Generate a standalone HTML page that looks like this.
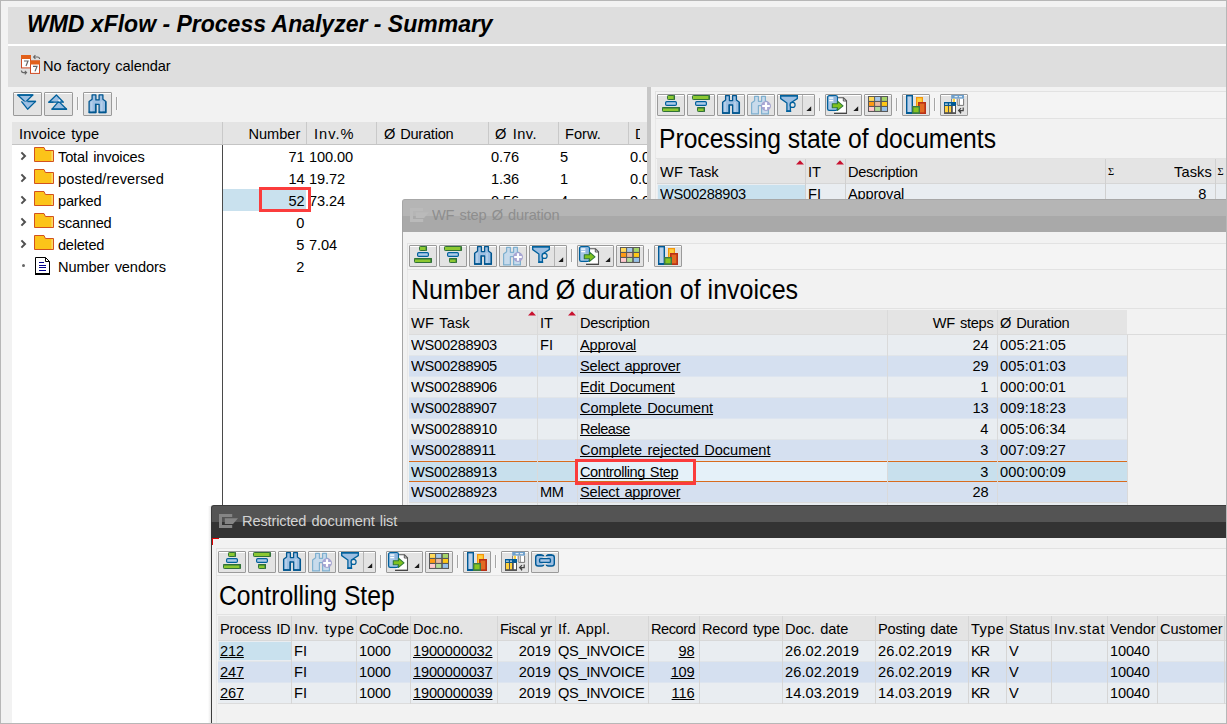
<!DOCTYPE html>
<html lang="en"><head><meta charset="utf-8"><title>WMD xFlow - Process Analyzer - Summary</title>
<style>
html,body{margin:0;padding:0}
body{width:1227px;height:724px;overflow:hidden;background:#f2f2f2;position:relative;
 font-family:"Liberation Sans","DejaVu Sans",sans-serif;font-size:14.6px;color:#000}
div,span,i,a{box-sizing:border-box}
.abs,.t,.btn,.tsep,.bdiv,.box{position:absolute}
.t{white-space:nowrap;line-height:1;display:block}
.u{text-decoration:underline;text-decoration-thickness:1px;text-underline-offset:1px;text-decoration-skip-ink:none}
.btn{background:#e3e3e3;border:1px solid #9a9a9a;border-radius:1px;box-shadow:inset 0 1px 0 #fff}
.btn svg{position:absolute;left:-1px;top:-1px;display:block}
.bdiv{top:0;width:1px;height:100%;background:#b4b4b4}
.tsep{width:1px;height:13px;background:#a6a6a6;box-shadow:1px 0 0 #fafafa}
.hl{background:#e0e0e0}
.cell{position:absolute;overflow:hidden;white-space:nowrap}
</style></head><body>

<div class="box" style="left:8px;top:7px;width:1218px;height:37px;background:#dedede"></div>
<div class="box" style="left:8px;top:44px;width:1218px;height:2px;background:#fff"></div>
<div class="box" style="left:8px;top:46px;width:1218px;height:41px;background:#dedede"></div>
<span class="t" style="left:27px;top:12.53px;font-size:23px;font-weight:bold;font-style:italic;">WMD xFlow - Process Analyzer - Summary</span>
<svg class="abs" style="left:20px;top:54px" width="22" height="22" viewBox="0 0 22 22">
<rect x="1.5" y="1.5" width="9" height="12.4" fill="#fff" stroke="#d04a22"/><rect x="1" y="1" width="10" height="4" fill="#e2601a"/>
<path d="M4,7 H8 L6,12" fill="none" stroke="#666" stroke-width="1.2"/>
<rect x="10.5" y="7" width="9" height="12.4" fill="#fff" stroke="#d04a22"/><rect x="10" y="6.5" width="10" height="4" fill="#e2601a"/>
<path d="M13,12.4 H17 L15,17.4" fill="none" stroke="#666" stroke-width="1.2"/>
<path d="M13.6,3 H17.4 Q19.6,3 19.6,5 M15.4,1.2 L13.6,3 L15.4,4.8" fill="none" stroke="#666" stroke-width="1.1"/>
<path d="M1.4,16.6 Q1.4,18.6 3.4,18.6 H6.6 M4.8,16.8 L6.6,18.6 L4.8,20.4" fill="none" stroke="#666" stroke-width="1.1"/>
</svg>
<span class="t" style="left:43px;top:57.90px;font-size:15.0px;word-spacing:1.336px;letter-spacing:-0.089px;transform:scaleX(0.9733);transform-origin:0 0;">No factory calendar</span>
<div class="btn" style="left:13px;top:92px;width:29px;height:24px"><svg width="29" height="24" viewBox="0 0 29 24"><g transform="translate(-0.2,-0.2)"><path d="M5,3.2 H20 L12.6,10.4 Z" fill="#9dbfe2" stroke="#00609c" stroke-width="1.3" stroke-linejoin="round"/><path d="M8.6,9.6 L14.8,17.4 L22.8,9.6 H15" fill="#9dbfe2" stroke="#00609c" stroke-width="1.3" stroke-linejoin="round"/><rect x="4.6" y="2.6" width="15.8" height="1.4" fill="#00609c"/><rect x="14.6" y="9" width="8.6" height="1.4" fill="#00609c"/></g></svg></div>
<div class="btn" style="left:44px;top:92px;width:29px;height:24px"><svg width="29" height="24" viewBox="0 0 29 24"><g transform="translate(-0.2,-0.2)"><path d="M12.6,3.2 L19.6,10.4 H5 Z" fill="#9dbfe2" stroke="#00609c" stroke-width="1.3" stroke-linejoin="round"/><path d="M14.9,9.6 L22.8,17.4 H8.2 Z" fill="#9dbfe2" stroke="#00609c" stroke-width="1.3" stroke-linejoin="round"/><rect x="7.8" y="16.6" width="15.4" height="1.5" fill="#00609c"/><rect x="4.6" y="9.8" width="5" height="1.3" fill="#00609c"/><circle cx="15.4" cy="8.8" r="1.1" fill="#e8f0f8"/></g></svg></div>
<div class="tsep" style="left:77px;top:97px"></div>
<div class="btn" style="left:83px;top:92px;width:29px;height:24px"><svg width="29" height="24" viewBox="0 0 29 24"><g transform="translate(0.5,1.3)"><path d="M8.6,1.6 H12.4 V6.6 H15.6 V1.6 H19.4 V6 L22.4,8.2 V19.2 H15.6 V11 H12.4 V19.2 H5.6 V8.2 L8.6,6 Z" fill="#9dbfe2" stroke="#00568f" stroke-width="1.3" stroke-linejoin="round"/><rect x="5.2" y="18.2" width="7.6" height="1.6" fill="#00568f"/><rect x="15.2" y="18.2" width="7.6" height="1.6" fill="#00568f"/><rect x="11.4" y="10.4" width="1.4" height="8" fill="#00568f"/><rect x="21.6" y="8.4" width="1.2" height="10" fill="#00568f"/><rect x="7" y="8" width="2" height="10" fill="#bdd5ee" opacity="0.7"/><rect x="17" y="8" width="2" height="10" fill="#bdd5ee" opacity="0.7"/></g></svg></div>
<div class="tsep" style="left:116px;top:97px"></div>
<div class="box" style="left:12px;top:145px;width:635px;height:579px;background:#fff"></div>
<div class="box" style="left:12px;top:122px;width:635px;height:23px;background:#e4e4e4;border-bottom:1px solid #c4c4c4"></div>
<div class="box" style="left:222px;top:122px;width:1px;height:22px;background:#c9c9c9"></div>
<div class="box" style="left:306px;top:122px;width:1px;height:22px;background:#c9c9c9"></div>
<div class="box" style="left:376px;top:122px;width:1px;height:22px;background:#c9c9c9"></div>
<div class="box" style="left:488px;top:122px;width:1px;height:22px;background:#c9c9c9"></div>
<div class="box" style="left:558px;top:122px;width:1px;height:22px;background:#c9c9c9"></div>
<div class="box" style="left:628px;top:122px;width:1px;height:22px;background:#c9c9c9"></div>
<div class="box" style="left:222px;top:145px;width:1px;height:579px;background:#4a4a4a"></div>
<span class="t" style="left:18.5px;top:125.90px;font-size:15.0px;word-spacing:1.336px;letter-spacing:0.074px;transform:scaleX(0.9733);transform-origin:0 0;">Invoice type</span>
<span class="t" style="right:927px;top:125.90px;font-size:15.0px;transform:scaleX(0.9733);transform-origin:100% 0;">Number</span>
<span class="t" style="left:313.5px;top:125.90px;font-size:15.0px;letter-spacing:1.027px;transform:scaleX(0.9733);transform-origin:0 0;">Inv.%</span>
<span class="t" style="left:383.5px;top:125.90px;font-size:15.0px;word-spacing:1.336px;letter-spacing:-0.257px;transform:scaleX(0.9733);transform-origin:0 0;">Ø Duration</span>
<span class="t" style="left:495.3px;top:125.90px;font-size:15.0px;word-spacing:1.336px;letter-spacing:0.497px;transform:scaleX(0.9733);transform-origin:0 0;">Ø Inv.</span>
<span class="t" style="left:565px;top:125.90px;font-size:15.0px;transform:scaleX(0.9733);transform-origin:0 0;">Forw.</span>
<div class="cell" style="left:635px;top:124px;width:5.4px;height:18px"><span class="t" style="left:0.4px;top:1.90px;font-size:15.0px;transform:scaleX(0.9733);transform-origin:0 0;">D</span></div>
<div class="box" style="left:223px;top:189px;width:83px;height:22px;background:#c9e1ee"></div>
<svg class="abs" style="left:20px;top:151px" width="7" height="10" viewBox="0 0 7 10"><path d="M1.4,1.4 L5,5 L1.4,8.6" fill="none" stroke="#505050" stroke-width="2"/></svg>
<svg class="abs" style="left:34px;top:147px" width="20" height="15" viewBox="0 0 20 15"><path d="M0.5,0.5 H10 L11.4,3.5 H19.5 V14.5 H0.5 Z" fill="#fcc419" stroke="#d2521e" stroke-linejoin="round"/><rect x="17.4" y="4.2" width="1.6" height="9.8" fill="#fdd968"/></svg>
<span class="t" style="left:58.3px;top:148.90px;font-size:15.0px;word-spacing:1.336px;letter-spacing:-0.167px;transform:scaleX(0.9733);transform-origin:0 0;">Total invoices</span>
<span class="t" style="right:923px;top:148.90px;font-size:15.0px;letter-spacing:-0.175px;transform:scaleX(0.9733);transform-origin:100% 0;">71</span>
<span class="t" style="left:308.6px;top:148.90px;font-size:15.0px;letter-spacing:-0.103px;transform:scaleX(0.9733);transform-origin:0 0;">100.00</span>
<span class="t" style="left:490.5px;top:148.90px;font-size:15.0px;letter-spacing:-0.103px;transform:scaleX(0.9733);transform-origin:0 0;">0.76</span>
<span class="t" style="left:560.3px;top:148.90px;font-size:15.0px;letter-spacing:-0.175px;transform:scaleX(0.9733);transform-origin:0 0;">5</span>
<div class="cell" style="left:629px;top:145px;width:18px;height:22px"><span class="t" style="left:1px;top:3.90px;font-size:15.0px;letter-spacing:-0.103px;transform:scaleX(0.9733);transform-origin:0 0;">0.00</span></div>
<svg class="abs" style="left:20px;top:173px" width="7" height="10" viewBox="0 0 7 10"><path d="M1.4,1.4 L5,5 L1.4,8.6" fill="none" stroke="#505050" stroke-width="2"/></svg>
<svg class="abs" style="left:34px;top:169px" width="20" height="15" viewBox="0 0 20 15"><path d="M0.5,0.5 H10 L11.4,3.5 H19.5 V14.5 H0.5 Z" fill="#fcc419" stroke="#d2521e" stroke-linejoin="round"/><rect x="17.4" y="4.2" width="1.6" height="9.8" fill="#fdd968"/></svg>
<span class="t" style="left:58.3px;top:170.90px;font-size:15.0px;letter-spacing:0.092px;transform:scaleX(0.9733);transform-origin:0 0;">posted/reversed</span>
<span class="t" style="right:923px;top:170.90px;font-size:15.0px;letter-spacing:-0.175px;transform:scaleX(0.9733);transform-origin:100% 0;">14</span>
<span class="t" style="left:308.6px;top:170.90px;font-size:15.0px;letter-spacing:-0.103px;transform:scaleX(0.9733);transform-origin:0 0;">19.72</span>
<span class="t" style="left:490.5px;top:170.90px;font-size:15.0px;letter-spacing:-0.103px;transform:scaleX(0.9733);transform-origin:0 0;">1.36</span>
<span class="t" style="left:560.3px;top:170.90px;font-size:15.0px;letter-spacing:-0.175px;transform:scaleX(0.9733);transform-origin:0 0;">1</span>
<div class="cell" style="left:629px;top:167px;width:18px;height:22px"><span class="t" style="left:1px;top:3.90px;font-size:15.0px;letter-spacing:-0.103px;transform:scaleX(0.9733);transform-origin:0 0;">0.00</span></div>
<svg class="abs" style="left:20px;top:195px" width="7" height="10" viewBox="0 0 7 10"><path d="M1.4,1.4 L5,5 L1.4,8.6" fill="none" stroke="#505050" stroke-width="2"/></svg>
<svg class="abs" style="left:34px;top:191px" width="20" height="15" viewBox="0 0 20 15"><path d="M0.5,0.5 H10 L11.4,3.5 H19.5 V14.5 H0.5 Z" fill="#fcc419" stroke="#d2521e" stroke-linejoin="round"/><rect x="17.4" y="4.2" width="1.6" height="9.8" fill="#fdd968"/></svg>
<span class="t" style="left:58.3px;top:192.90px;font-size:15.0px;letter-spacing:-0.205px;transform:scaleX(0.9733);transform-origin:0 0;">parked</span>
<span class="t" style="right:923px;top:192.90px;font-size:15.0px;letter-spacing:-0.175px;transform:scaleX(0.9733);transform-origin:100% 0;">52</span>
<span class="t" style="left:308.6px;top:192.90px;font-size:15.0px;letter-spacing:-0.103px;transform:scaleX(0.9733);transform-origin:0 0;">73.24</span>
<span class="t" style="left:490.5px;top:192.90px;font-size:15.0px;letter-spacing:-0.103px;transform:scaleX(0.9733);transform-origin:0 0;">0.56</span>
<span class="t" style="left:560.3px;top:192.90px;font-size:15.0px;letter-spacing:-0.175px;transform:scaleX(0.9733);transform-origin:0 0;">4</span>
<div class="cell" style="left:629px;top:189px;width:18px;height:22px"><span class="t" style="left:1px;top:3.90px;font-size:15.0px;letter-spacing:-0.103px;transform:scaleX(0.9733);transform-origin:0 0;">0.00</span></div>
<svg class="abs" style="left:20px;top:217px" width="7" height="10" viewBox="0 0 7 10"><path d="M1.4,1.4 L5,5 L1.4,8.6" fill="none" stroke="#505050" stroke-width="2"/></svg>
<svg class="abs" style="left:34px;top:213px" width="20" height="15" viewBox="0 0 20 15"><path d="M0.5,0.5 H10 L11.4,3.5 H19.5 V14.5 H0.5 Z" fill="#fcc419" stroke="#d2521e" stroke-linejoin="round"/><rect x="17.4" y="4.2" width="1.6" height="9.8" fill="#fdd968"/></svg>
<span class="t" style="left:58.3px;top:214.90px;font-size:15.0px;letter-spacing:-0.257px;transform:scaleX(0.9733);transform-origin:0 0;">scanned</span>
<span class="t" style="right:923px;top:214.90px;font-size:15.0px;letter-spacing:-0.175px;transform:scaleX(0.9733);transform-origin:100% 0;">0</span>
<svg class="abs" style="left:20px;top:239px" width="7" height="10" viewBox="0 0 7 10"><path d="M1.4,1.4 L5,5 L1.4,8.6" fill="none" stroke="#505050" stroke-width="2"/></svg>
<svg class="abs" style="left:34px;top:235px" width="20" height="15" viewBox="0 0 20 15"><path d="M0.5,0.5 H10 L11.4,3.5 H19.5 V14.5 H0.5 Z" fill="#fcc419" stroke="#d2521e" stroke-linejoin="round"/><rect x="17.4" y="4.2" width="1.6" height="9.8" fill="#fdd968"/></svg>
<span class="t" style="left:58.3px;top:236.90px;font-size:15.0px;letter-spacing:-0.257px;transform:scaleX(0.9733);transform-origin:0 0;">deleted</span>
<span class="t" style="right:923px;top:236.90px;font-size:15.0px;letter-spacing:-0.175px;transform:scaleX(0.9733);transform-origin:100% 0;">5</span>
<span class="t" style="left:308.6px;top:236.90px;font-size:15.0px;letter-spacing:-0.103px;transform:scaleX(0.9733);transform-origin:0 0;">7.04</span>
<div class="box" style="left:22px;top:264px;width:3px;height:3px;border-radius:2px;background:#666"></div>
<svg class="abs" style="left:35px;top:257px" width="15" height="18" viewBox="0 0 15 18"><path d="M0.5,0.5 H10.5 L14.5,4.5 V16.5 H0.5 Z" fill="#fff" stroke="#000"/><path d="M10.5,0.5 V4.5 H14.5" fill="none" stroke="#000"/><rect x="0" y="16" width="15" height="2" fill="#000"/><path d="M4,5.5 H9 M4,8.5 H11 M4,10.5 H11 M4,13.5 H11" stroke="#00008b" stroke-width="1"/></svg>
<span class="t" style="left:58.3px;top:258.90px;font-size:15.0px;word-spacing:1.336px;letter-spacing:-0.095px;transform:scaleX(0.9733);transform-origin:0 0;">Number vendors</span>
<span class="t" style="right:923px;top:258.90px;font-size:15.0px;letter-spacing:-0.175px;transform:scaleX(0.9733);transform-origin:100% 0;">2</span>
<div class="box" style="left:259px;top:187px;width:52px;height:25px;border:3px solid #fb3c3c"></div>
<div class="box" style="left:647px;top:87px;width:4px;height:637px;background:#c7c7c7"></div>
<div class="box" style="left:655px;top:91px;width:572px;height:28px;border:1px solid #e2e2e2;border-right:0;background:#f4f4f4"></div>
<div class="btn" style="left:657px;top:94px;width:28px;height:22px"><svg width="28" height="22" viewBox="0 0 28 22"><rect x="10.5" y="1.5" width="7" height="4" rx="0.8" fill="#8cc832" stroke="#2f7038"/><rect x="16.6" y="1.2" width="1.4" height="4.6" fill="#2f7038"/><rect x="8.6" y="7.6" width="10.8" height="3.8" rx="1.2" fill="#aecbe9" stroke="#00609c" stroke-width="1.2"/><rect x="5.5" y="13.5" width="17" height="4" rx="0.8" fill="#8cc832" stroke="#2f7038"/><rect x="5.2" y="13.2" width="17.6" height="1.3" fill="#2f7038"/><rect x="21.4" y="13.2" width="1.5" height="4.6" fill="#2f7038"/></svg></div><div class="btn" style="left:687px;top:94px;width:28px;height:22px"><svg width="28" height="22" viewBox="0 0 28 22"><rect x="5.5" y="1.5" width="17" height="4" rx="0.8" fill="#8cc832" stroke="#2f7038"/><rect x="21.4" y="1.2" width="1.5" height="4.6" fill="#2f7038"/><rect x="8.6" y="7.6" width="10.8" height="3.8" rx="1.2" fill="#aecbe9" stroke="#00609c" stroke-width="1.2"/><rect x="10.5" y="13.5" width="7" height="4" rx="0.8" fill="#8cc832" stroke="#2f7038"/><rect x="10.2" y="13.2" width="7.6" height="1.3" fill="#2f7038"/><rect x="16.6" y="13.2" width="1.4" height="4.6" fill="#2f7038"/></svg></div><div class="btn" style="left:717px;top:94px;width:28px;height:22px"><svg width="28" height="22" viewBox="0 0 28 22"><g transform="translate(0,0)"><path d="M8.6,1.6 H12.4 V6.6 H15.6 V1.6 H19.4 V6 L22.4,8.2 V19.2 H15.6 V11 H12.4 V19.2 H5.6 V8.2 L8.6,6 Z" fill="#9dbfe2" stroke="#00568f" stroke-width="1.3" stroke-linejoin="round"/><rect x="5.2" y="18.2" width="7.6" height="1.6" fill="#00568f"/><rect x="15.2" y="18.2" width="7.6" height="1.6" fill="#00568f"/><rect x="11.4" y="10.4" width="1.4" height="8" fill="#00568f"/><rect x="21.6" y="8.4" width="1.2" height="10" fill="#00568f"/><rect x="7" y="8" width="2" height="10" fill="#bdd5ee" opacity="0.7"/><rect x="17" y="8" width="2" height="10" fill="#bdd5ee" opacity="0.7"/></g></svg></div><div class="btn" style="left:747px;top:94px;width:28px;height:22px"><svg width="28" height="22" viewBox="0 0 28 22"><path transform="translate(-1,0.7)" d="M8.6,1.6 H12.4 V6.6 H15.6 V1.6 H19.4 V6 L22.4,8.2 V19.2 H15.6 V11 H12.4 V19.2 H5.6 V8.2 L8.6,6 Z" fill="#c8dbec" stroke="#7fb0cf" stroke-width="1.2" stroke-linejoin="round"/><circle cx="19" cy="12" r="4.6" fill="#a9a6d4" stroke="#9c9acb" stroke-width="0.6"/><path d="M19,8.2 V15.8 M15.2,12 H22.8" stroke="#fff" stroke-width="2.2"/></svg></div><div class="btn" style="left:777px;top:94px;width:38px;height:22px"><svg width="38" height="22" viewBox="0 0 38 22"><path d="M3.7,1.7 H20.3 V4.6 L13.4,9 V17 H9.9 V9 L3.7,4.6 Z" fill="#9dbfe2" stroke="#00609c" stroke-width="1.3" stroke-linejoin="miter"/><rect x="3" y="1" width="18" height="1.6" fill="#00609c"/><circle cx="15.6" cy="10.9" r="2.5" fill="#e6e6e6" stroke="#00609c" stroke-width="1.2"/><rect x="9.2" y="16.6" width="5" height="1.4" fill="#00609c"/><path d="M34.2,12.2 V17 H29.400000000000002 Z" fill="#1a1a1a"/></svg><i class="bdiv" style="left:24px"></i></div><div class="tsep" style="left:819px;top:98px"></div><div class="btn" style="left:825px;top:94px;width:37px;height:22px"><svg width="37" height="22" viewBox="0 0 37 22"><path d="M11.5,3.8 H18.5 L21.5,6.8 V19.2 H9.5" fill="#fff" stroke="#555" stroke-width="1.1"/><path d="M18.3,3.8 V7 H21.5" fill="none" stroke="#555" stroke-width="1"/><rect x="9" y="18.8" width="12.9" height="1.2" fill="#444"/><rect x="2.6" y="1.7" width="9.8" height="14.6" rx="1.6" fill="#a9c8e8" stroke="#00609c" stroke-width="1.3"/><rect x="4.2" y="3.4" width="4" height="1.3" fill="#fff"/><rect x="4.2" y="6" width="4" height="1.2" fill="#fff"/><rect x="8.8" y="2.6" width="2.6" height="6" fill="#8fb4dc"/><path d="M7.3,9.8 H12.5 V7.2 L18,11.8 L12.5,16.4 V13.8 H7.3 Z" fill="#7fc21e" stroke="#2f7a38" stroke-width="1.1" stroke-linejoin="round"/><path d="M33.2,12.2 V17 H28.400000000000002 Z" fill="#1a1a1a"/></svg></div><div class="btn" style="left:864px;top:94px;width:28px;height:22px"><svg width="28" height="22" viewBox="0 0 28 22"><rect x="4" y="2" width="20" height="16" fill="#595959"/><rect x="5" y="3" width="5.1" height="3.9" fill="#ffd95a"/><rect x="11.1" y="3" width="5.1" height="3.9" fill="#a6c8ea"/><rect x="17.8" y="3" width="5.2" height="3.9" fill="#a5d46a"/><rect x="5" y="8" width="5.1" height="3.9" fill="#ff9a14"/><rect x="11.1" y="8" width="5.1" height="3.9" fill="#e8b8a0"/><rect x="17.8" y="8" width="5.2" height="3.9" fill="#ffc814"/><rect x="5" y="13" width="5.1" height="3.9" fill="#ffc8cc"/><rect x="11.1" y="13" width="5.1" height="3.9" fill="#b0dc96"/><rect x="17.8" y="13" width="5.2" height="3.9" fill="#96c0e8"/></svg></div><div class="tsep" style="left:896px;top:98px"></div><div class="btn" style="left:902px;top:94px;width:28px;height:22px"><svg width="28" height="22" viewBox="0 0 28 22"><rect x="4.7" y="1.7" width="5.6" height="17.6" fill="#b9d1eb" stroke="#005a96" stroke-width="1.4"/><rect x="4" y="18" width="7" height="2" fill="#005a96"/><rect x="14.6" y="3.6" width="5.8" height="15" fill="#ffd040" stroke="#f5960a" stroke-width="1.2"/><rect x="16.8" y="8.8" width="6.4" height="10.4" fill="#e26a22" stroke="#b83018" stroke-width="1.6"/><rect x="10.7" y="12.7" width="6.6" height="6.6" fill="#86c41e" stroke="#3a7a44" stroke-width="1.4"/><rect x="10" y="18.4" width="8" height="1.6" fill="#3a7a44"/></svg></div><div class="tsep" style="left:934px;top:98px"></div><div class="btn" style="left:940px;top:94px;width:28px;height:22px"><svg width="28" height="22" viewBox="0 0 28 22"><rect x="11.2" y="0.9" width="12.8" height="3.9" fill="#6ea0cc"/><rect x="14.6" y="2.2" width="3" height="1" fill="#fff"/><rect x="19" y="2.2" width="3" height="1" fill="#fff"/><rect x="11.2" y="4.8" width="12.8" height="6.8" fill="#fff"/><path d="M11.6,4.8 V11 M17.2,4.8 V11 M19.2,4.8 V11 M23.6,4.8 V11.4 H17.4" fill="none" stroke="#666" stroke-width="0.9"/><rect x="12.8" y="4.8" width="2.2" height="3.4" fill="#ffd23c"/><rect x="4" y="8" width="12" height="12" fill="#555"/><rect x="4" y="8" width="12" height="3.8" fill="#005a96"/><rect x="5" y="9.6" width="2.8" height="1" fill="#fff"/><rect x="9" y="9.6" width="2" height="1" fill="#fff"/><rect x="5" y="12" width="3" height="6.2" fill="#ffd23c"/><rect x="9" y="12" width="2" height="6.2" fill="#ffd23c"/><rect x="12.8" y="12" width="2.2" height="6.2" fill="#fff"/><path d="M23.2,13.4 V16.6 H18.8 M21,14.2 L18.6,16.6 L21,19" fill="none" stroke="#444" stroke-width="1.2"/><path d="M20.6,16.6 V19.6" stroke="#444" stroke-width="0.9"/></svg></div>
<span class="t" style="left:658.6px;top:125.51px;font-size:26.8px;transform:scaleX(0.9196);transform-origin:0 0;">Processing state of documents</span>
<div class="box" style="left:655px;top:158px;width:572px;height:1px;background:#e2e2e2"></div>
<div class="box" style="left:655px;top:119px;width:1px;height:90px;background:#e8e8e8"></div>
<div class="box" style="left:657px;top:159px;width:570px;height:25px;background:#e4e4e4;border-bottom:1px solid #d6d6d6"></div>
<div class="box" style="left:657px;top:184px;width:570px;height:21px;background:#e9edf1"></div>
<div class="box" style="left:658px;top:185px;width:147px;height:20px;background:#c9e1ee"></div>
<div class="box" style="left:805px;top:159px;width:1px;height:46px;background:#d0d0d0"></div>
<div class="box" style="left:845px;top:159px;width:1px;height:46px;background:#d0d0d0"></div>
<div class="box" style="left:1105px;top:159px;width:1px;height:46px;background:#d0d0d0"></div>
<div class="box" style="left:1215px;top:159px;width:1px;height:46px;background:#d0d0d0"></div>
<span class="t" style="left:659.5px;top:163.90px;font-size:15.0px;word-spacing:1.336px;letter-spacing:0.148px;transform:scaleX(0.9733);transform-origin:0 0;">WF Task</span>
<span class="t" style="left:808px;top:163.90px;font-size:15.0px;transform:scaleX(0.9733);transform-origin:0 0;">IT</span>
<span class="t" style="left:847.6px;top:163.90px;font-size:15.0px;letter-spacing:-0.329px;transform:scaleX(0.9733);transform-origin:0 0;">Description</span>
<span class="t" style="left:1108px;top:166.71px;font-size:10.5px;font-family:'Liberation Serif',serif;">Σ</span>
<span class="t" style="right:15px;top:163.90px;font-size:15.0px;letter-spacing:0.103px;transform:scaleX(0.9733);transform-origin:100% 0;">Tasks</span>
<span class="t" style="left:1217.5px;top:166.71px;font-size:10.5px;font-family:'Liberation Serif',serif;">Σ</span>
<svg class="abs" style="left:795.6px;top:159.8px" width="8" height="5" viewBox="0 0 8 5"><path d="M0,4.6 L4,0.2 L8,4.6 Z" fill="#c8102e"/></svg>
<svg class="abs" style="left:835.6px;top:159.8px" width="8" height="5" viewBox="0 0 8 5"><path d="M0,4.6 L4,0.2 L8,4.6 Z" fill="#c8102e"/></svg>
<span class="t" style="left:659.5px;top:185.90px;font-size:15.0px;letter-spacing:-0.257px;transform:scaleX(0.9733);transform-origin:0 0;">WS00288903</span>
<span class="t" style="left:808px;top:185.90px;font-size:15.0px;transform:scaleX(0.9733);transform-origin:0 0;">FI</span>
<span class="t" style="left:847.6px;top:185.90px;font-size:15.0px;letter-spacing:-0.185px;transform:scaleX(0.9733);transform-origin:0 0;">Approval</span>
<span class="t" style="right:21px;top:185.90px;font-size:15.0px;letter-spacing:-0.175px;transform:scaleX(0.9733);transform-origin:100% 0;">8</span>
<div class="box" style="left:402px;top:203px;width:825px;height:326px;background:#f2f2f2;border-left:1px solid #a6a6a6"></div>
<div class="box" style="left:402px;top:199px;width:825px;height:17px;background:#b5b5b5;border-top:1px solid #a7a7a7;border-left:1px solid #a6a6a6;border-top-left-radius:3px"></div>
<div class="box" style="left:402px;top:216px;width:825px;height:16px;background:#a9a9a9;border-left:1px solid #a2a2a2"></div>
<svg class="abs" style="left:410px;top:208px" width="20" height="14" viewBox="0 0 20 14"><path d="M0,0 H13.2 V3 H3 V11 H13.2 V14 H0 Z" fill="#bababa"/><path d="M5.8,4.2 H19 L14,10 H5.8 Z" fill="#bababa"/></svg>
<span class="t" style="left:432.3px;top:207.20px;font-size:15.0px;color:#8e8e8e;word-spacing:1.336px;letter-spacing:-0.171px;transform:scaleX(0.9733);transform-origin:0 0;">WF step Ø duration</span>
<div class="box" style="left:407px;top:243px;width:820px;height:27px;border:1px solid #e2e2e2;border-right:0;background:#f4f4f4"></div>
<div class="btn" style="left:409px;top:245px;width:28px;height:22px"><svg width="28" height="22" viewBox="0 0 28 22"><rect x="10.5" y="1.5" width="7" height="4" rx="0.8" fill="#8cc832" stroke="#2f7038"/><rect x="16.6" y="1.2" width="1.4" height="4.6" fill="#2f7038"/><rect x="8.6" y="7.6" width="10.8" height="3.8" rx="1.2" fill="#aecbe9" stroke="#00609c" stroke-width="1.2"/><rect x="5.5" y="13.5" width="17" height="4" rx="0.8" fill="#8cc832" stroke="#2f7038"/><rect x="5.2" y="13.2" width="17.6" height="1.3" fill="#2f7038"/><rect x="21.4" y="13.2" width="1.5" height="4.6" fill="#2f7038"/></svg></div><div class="btn" style="left:439px;top:245px;width:28px;height:22px"><svg width="28" height="22" viewBox="0 0 28 22"><rect x="5.5" y="1.5" width="17" height="4" rx="0.8" fill="#8cc832" stroke="#2f7038"/><rect x="21.4" y="1.2" width="1.5" height="4.6" fill="#2f7038"/><rect x="8.6" y="7.6" width="10.8" height="3.8" rx="1.2" fill="#aecbe9" stroke="#00609c" stroke-width="1.2"/><rect x="10.5" y="13.5" width="7" height="4" rx="0.8" fill="#8cc832" stroke="#2f7038"/><rect x="10.2" y="13.2" width="7.6" height="1.3" fill="#2f7038"/><rect x="16.6" y="13.2" width="1.4" height="4.6" fill="#2f7038"/></svg></div><div class="btn" style="left:469px;top:245px;width:28px;height:22px"><svg width="28" height="22" viewBox="0 0 28 22"><g transform="translate(0,0)"><path d="M8.6,1.6 H12.4 V6.6 H15.6 V1.6 H19.4 V6 L22.4,8.2 V19.2 H15.6 V11 H12.4 V19.2 H5.6 V8.2 L8.6,6 Z" fill="#9dbfe2" stroke="#00568f" stroke-width="1.3" stroke-linejoin="round"/><rect x="5.2" y="18.2" width="7.6" height="1.6" fill="#00568f"/><rect x="15.2" y="18.2" width="7.6" height="1.6" fill="#00568f"/><rect x="11.4" y="10.4" width="1.4" height="8" fill="#00568f"/><rect x="21.6" y="8.4" width="1.2" height="10" fill="#00568f"/><rect x="7" y="8" width="2" height="10" fill="#bdd5ee" opacity="0.7"/><rect x="17" y="8" width="2" height="10" fill="#bdd5ee" opacity="0.7"/></g></svg></div><div class="btn" style="left:499px;top:245px;width:28px;height:22px"><svg width="28" height="22" viewBox="0 0 28 22"><path transform="translate(-1,0.7)" d="M8.6,1.6 H12.4 V6.6 H15.6 V1.6 H19.4 V6 L22.4,8.2 V19.2 H15.6 V11 H12.4 V19.2 H5.6 V8.2 L8.6,6 Z" fill="#c8dbec" stroke="#7fb0cf" stroke-width="1.2" stroke-linejoin="round"/><circle cx="19" cy="12" r="4.6" fill="#a9a6d4" stroke="#9c9acb" stroke-width="0.6"/><path d="M19,8.2 V15.8 M15.2,12 H22.8" stroke="#fff" stroke-width="2.2"/></svg></div><div class="btn" style="left:529px;top:245px;width:38px;height:22px"><svg width="38" height="22" viewBox="0 0 38 22"><path d="M3.7,1.7 H20.3 V4.6 L13.4,9 V17 H9.9 V9 L3.7,4.6 Z" fill="#9dbfe2" stroke="#00609c" stroke-width="1.3" stroke-linejoin="miter"/><rect x="3" y="1" width="18" height="1.6" fill="#00609c"/><circle cx="15.6" cy="10.9" r="2.5" fill="#e6e6e6" stroke="#00609c" stroke-width="1.2"/><rect x="9.2" y="16.6" width="5" height="1.4" fill="#00609c"/><path d="M34.2,12.2 V17 H29.400000000000002 Z" fill="#1a1a1a"/></svg><i class="bdiv" style="left:24px"></i></div><div class="tsep" style="left:571px;top:249px"></div><div class="btn" style="left:577px;top:245px;width:37px;height:22px"><svg width="37" height="22" viewBox="0 0 37 22"><path d="M11.5,3.8 H18.5 L21.5,6.8 V19.2 H9.5" fill="#fff" stroke="#555" stroke-width="1.1"/><path d="M18.3,3.8 V7 H21.5" fill="none" stroke="#555" stroke-width="1"/><rect x="9" y="18.8" width="12.9" height="1.2" fill="#444"/><rect x="2.6" y="1.7" width="9.8" height="14.6" rx="1.6" fill="#a9c8e8" stroke="#00609c" stroke-width="1.3"/><rect x="4.2" y="3.4" width="4" height="1.3" fill="#fff"/><rect x="4.2" y="6" width="4" height="1.2" fill="#fff"/><rect x="8.8" y="2.6" width="2.6" height="6" fill="#8fb4dc"/><path d="M7.3,9.8 H12.5 V7.2 L18,11.8 L12.5,16.4 V13.8 H7.3 Z" fill="#7fc21e" stroke="#2f7a38" stroke-width="1.1" stroke-linejoin="round"/><path d="M33.2,12.2 V17 H28.400000000000002 Z" fill="#1a1a1a"/></svg></div><div class="btn" style="left:616px;top:245px;width:28px;height:22px"><svg width="28" height="22" viewBox="0 0 28 22"><rect x="4" y="2" width="20" height="16" fill="#595959"/><rect x="5" y="3" width="5.1" height="3.9" fill="#ffd95a"/><rect x="11.1" y="3" width="5.1" height="3.9" fill="#a6c8ea"/><rect x="17.8" y="3" width="5.2" height="3.9" fill="#a5d46a"/><rect x="5" y="8" width="5.1" height="3.9" fill="#ff9a14"/><rect x="11.1" y="8" width="5.1" height="3.9" fill="#e8b8a0"/><rect x="17.8" y="8" width="5.2" height="3.9" fill="#ffc814"/><rect x="5" y="13" width="5.1" height="3.9" fill="#ffc8cc"/><rect x="11.1" y="13" width="5.1" height="3.9" fill="#b0dc96"/><rect x="17.8" y="13" width="5.2" height="3.9" fill="#96c0e8"/></svg></div><div class="tsep" style="left:648px;top:249px"></div><div class="btn" style="left:654px;top:245px;width:28px;height:22px"><svg width="28" height="22" viewBox="0 0 28 22"><rect x="4.7" y="1.7" width="5.6" height="17.6" fill="#b9d1eb" stroke="#005a96" stroke-width="1.4"/><rect x="4" y="18" width="7" height="2" fill="#005a96"/><rect x="14.6" y="3.6" width="5.8" height="15" fill="#ffd040" stroke="#f5960a" stroke-width="1.2"/><rect x="16.8" y="8.8" width="6.4" height="10.4" fill="#e26a22" stroke="#b83018" stroke-width="1.6"/><rect x="10.7" y="12.7" width="6.6" height="6.6" fill="#86c41e" stroke="#3a7a44" stroke-width="1.4"/><rect x="10" y="18.4" width="8" height="1.6" fill="#3a7a44"/></svg></div>
<span class="t" style="left:410.8px;top:276.51px;font-size:26.8px;transform:scaleX(0.9348);transform-origin:0 0;">Number and Ø duration of invoices</span>
<div class="box" style="left:407px;top:308px;width:820px;height:1px;background:#e2e2e2"></div>
<div class="box" style="left:407px;top:270px;width:1px;height:240px;background:#e8e8e8"></div>
<div class="box" style="left:409px;top:334px;width:818px;height:1px;background:#dcdcdc"></div>
<div class="box" style="left:409px;top:310px;width:718px;height:24px;background:#e4e4e4"></div>
<div class="box" style="left:409px;top:335px;width:719px;height:21px;background:#e9edf1;border-bottom:1px solid #e1e5e9"></div>
<div class="box" style="left:409px;top:356px;width:719px;height:21px;background:#d5e0f0;border-bottom:1px solid #dde5f0"></div>
<div class="box" style="left:409px;top:377px;width:719px;height:21px;background:#e9edf1;border-bottom:1px solid #e1e5e9"></div>
<div class="box" style="left:409px;top:398px;width:719px;height:21px;background:#d5e0f0;border-bottom:1px solid #dde5f0"></div>
<div class="box" style="left:409px;top:419px;width:719px;height:21px;background:#e9edf1;border-bottom:1px solid #e1e5e9"></div>
<div class="box" style="left:409px;top:440px;width:719px;height:21px;background:#d5e0f0;border-bottom:1px solid #dde5f0"></div>
<div class="box" style="left:409px;top:461px;width:719px;height:21px;background:#c8e0ed"></div>
<div class="box" style="left:578px;top:462px;width:309px;height:19px;background:#e5f1f9"></div>
<div class="box" style="left:409px;top:482px;width:719px;height:21px;background:#d5e0f0;border-bottom:1px solid #dcdcdc"></div>
<div class="box" style="left:409px;top:503px;width:719px;height:3px;background:#e9edf1"></div>
<div class="box" style="left:537px;top:310px;width:1px;height:196px;background:#dadada"></div>
<div class="box" style="left:577px;top:310px;width:1px;height:196px;background:#dadada"></div>
<div class="box" style="left:887px;top:310px;width:1px;height:196px;background:#dadada"></div>
<div class="box" style="left:997px;top:310px;width:1px;height:196px;background:#dadada"></div>
<div class="box" style="left:1127px;top:335px;width:1px;height:171px;background:#dadada"></div>
<div class="box" style="left:409px;top:461px;width:718px;height:1px;background:#d86c1e"></div>
<div class="box" style="left:409px;top:481px;width:718px;height:1px;background:#d86c1e"></div>
<div class="box" style="left:537px;top:461px;width:1px;height:21px;background:#dadada"></div>
<div class="box" style="left:577px;top:461px;width:1px;height:21px;background:#dadada"></div>
<div class="box" style="left:887px;top:461px;width:1px;height:21px;background:#dadada"></div>
<div class="box" style="left:997px;top:461px;width:1px;height:21px;background:#dadada"></div>
<span class="t" style="left:411.4px;top:315.00px;font-size:15.0px;word-spacing:1.336px;letter-spacing:0.148px;transform:scaleX(0.9733);transform-origin:0 0;">WF Task</span>
<span class="t" style="left:540.3px;top:315.00px;font-size:15.0px;transform:scaleX(0.9733);transform-origin:0 0;">IT</span>
<span class="t" style="left:580.4px;top:315.00px;font-size:15.0px;letter-spacing:-0.329px;transform:scaleX(0.9733);transform-origin:0 0;">Description</span>
<span class="t" style="right:233.60000000000002px;top:315.00px;font-size:15.0px;word-spacing:1.336px;letter-spacing:-0.270px;transform:scaleX(0.9733);transform-origin:100% 0;">WF steps</span>
<span class="t" style="left:1000px;top:315.00px;font-size:15.0px;word-spacing:1.336px;letter-spacing:-0.257px;transform:scaleX(0.9733);transform-origin:0 0;">Ø Duration</span>
<svg class="abs" style="left:527.6px;top:310.6px" width="8" height="5" viewBox="0 0 8 5"><path d="M0,4.6 L4,0.2 L8,4.6 Z" fill="#c8102e"/></svg>
<svg class="abs" style="left:567.6px;top:310.6px" width="8" height="5" viewBox="0 0 8 5"><path d="M0,4.6 L4,0.2 L8,4.6 Z" fill="#c8102e"/></svg>
<span class="t" style="left:411.4px;top:336.60px;font-size:15.0px;letter-spacing:-0.257px;transform:scaleX(0.9733);transform-origin:0 0;">WS00288903</span>
<span class="t" style="left:540.3px;top:336.60px;font-size:15.0px;transform:scaleX(0.9733);transform-origin:0 0;">FI</span>
<span class="t u" style="left:580.4px;top:336.60px;font-size:15.0px;letter-spacing:-0.185px;transform:scaleX(0.9733);transform-origin:0 0;">Approval</span>
<span class="t" style="right:238.79999999999995px;top:336.60px;font-size:15.0px;letter-spacing:-0.175px;transform:scaleX(0.9733);transform-origin:100% 0;">24</span>
<span class="t" style="left:1000px;top:336.60px;font-size:15.0px;letter-spacing:0.123px;transform:scaleX(0.9733);transform-origin:0 0;">005:21:05</span>
<span class="t" style="left:411.4px;top:357.60px;font-size:15.0px;letter-spacing:-0.257px;transform:scaleX(0.9733);transform-origin:0 0;">WS00288905</span>
<span class="t u" style="left:580.4px;top:357.60px;font-size:15.0px;word-spacing:1.336px;letter-spacing:-0.223px;transform:scaleX(0.9733);transform-origin:0 0;">Select approver</span>
<span class="t" style="right:238.79999999999995px;top:357.60px;font-size:15.0px;letter-spacing:-0.175px;transform:scaleX(0.9733);transform-origin:100% 0;">29</span>
<span class="t" style="left:1000px;top:357.60px;font-size:15.0px;letter-spacing:0.123px;transform:scaleX(0.9733);transform-origin:0 0;">005:01:03</span>
<span class="t" style="left:411.4px;top:378.60px;font-size:15.0px;letter-spacing:-0.257px;transform:scaleX(0.9733);transform-origin:0 0;">WS00288906</span>
<span class="t u" style="left:580.4px;top:378.60px;font-size:15.0px;word-spacing:1.336px;letter-spacing:-0.185px;transform:scaleX(0.9733);transform-origin:0 0;">Edit Document</span>
<span class="t" style="right:238.79999999999995px;top:378.60px;font-size:15.0px;letter-spacing:-0.175px;transform:scaleX(0.9733);transform-origin:100% 0;">1</span>
<span class="t" style="left:1000px;top:378.60px;font-size:15.0px;letter-spacing:0.123px;transform:scaleX(0.9733);transform-origin:0 0;">000:00:01</span>
<span class="t" style="left:411.4px;top:399.60px;font-size:15.0px;letter-spacing:-0.257px;transform:scaleX(0.9733);transform-origin:0 0;">WS00288907</span>
<span class="t u" style="left:580.4px;top:399.60px;font-size:15.0px;word-spacing:1.336px;letter-spacing:-0.079px;transform:scaleX(0.9733);transform-origin:0 0;">Complete Document</span>
<span class="t" style="right:238.79999999999995px;top:399.60px;font-size:15.0px;letter-spacing:-0.175px;transform:scaleX(0.9733);transform-origin:100% 0;">13</span>
<span class="t" style="left:1000px;top:399.60px;font-size:15.0px;letter-spacing:0.123px;transform:scaleX(0.9733);transform-origin:0 0;">009:18:23</span>
<span class="t" style="left:411.4px;top:420.60px;font-size:15.0px;letter-spacing:-0.257px;transform:scaleX(0.9733);transform-origin:0 0;">WS00288910</span>
<span class="t u" style="left:580.4px;top:420.60px;font-size:15.0px;letter-spacing:-0.565px;transform:scaleX(0.9733);transform-origin:0 0;">Release</span>
<span class="t" style="right:238.79999999999995px;top:420.60px;font-size:15.0px;letter-spacing:-0.175px;transform:scaleX(0.9733);transform-origin:100% 0;">4</span>
<span class="t" style="left:1000px;top:420.60px;font-size:15.0px;letter-spacing:0.123px;transform:scaleX(0.9733);transform-origin:0 0;">005:06:34</span>
<span class="t" style="left:411.4px;top:441.60px;font-size:15.0px;letter-spacing:-0.257px;transform:scaleX(0.9733);transform-origin:0 0;">WS00288911</span>
<span class="t u" style="left:580.4px;top:441.60px;font-size:15.0px;word-spacing:1.336px;letter-spacing:-0.051px;transform:scaleX(0.9733);transform-origin:0 0;">Complete rejected Document</span>
<span class="t" style="right:238.79999999999995px;top:441.60px;font-size:15.0px;letter-spacing:-0.175px;transform:scaleX(0.9733);transform-origin:100% 0;">3</span>
<span class="t" style="left:1000px;top:441.60px;font-size:15.0px;letter-spacing:0.123px;transform:scaleX(0.9733);transform-origin:0 0;">007:09:27</span>
<span class="t" style="left:411.4px;top:463.60px;font-size:15.0px;letter-spacing:-0.257px;transform:scaleX(0.9733);transform-origin:0 0;">WS00288913</span>
<span class="t u" style="left:580.4px;top:463.60px;font-size:15.0px;word-spacing:1.336px;letter-spacing:-0.453px;transform:scaleX(0.9733);transform-origin:0 0;">Controlling Step</span>
<span class="t" style="right:238.79999999999995px;top:463.60px;font-size:15.0px;letter-spacing:-0.175px;transform:scaleX(0.9733);transform-origin:100% 0;">3</span>
<span class="t" style="left:1000px;top:463.60px;font-size:15.0px;letter-spacing:0.123px;transform:scaleX(0.9733);transform-origin:0 0;">000:00:09</span>
<span class="t" style="left:411.4px;top:483.60px;font-size:15.0px;letter-spacing:-0.257px;transform:scaleX(0.9733);transform-origin:0 0;">WS00288923</span>
<span class="t" style="left:540.3px;top:483.60px;font-size:15.0px;letter-spacing:-0.514px;transform:scaleX(0.9733);transform-origin:0 0;">MM</span>
<span class="t u" style="left:580.4px;top:483.60px;font-size:15.0px;word-spacing:1.336px;letter-spacing:-0.223px;transform:scaleX(0.9733);transform-origin:0 0;">Select approver</span>
<span class="t" style="right:238.79999999999995px;top:483.60px;font-size:15.0px;letter-spacing:-0.175px;transform:scaleX(0.9733);transform-origin:100% 0;">28</span>
<div class="box" style="left:575px;top:459px;width:121px;height:26px;border:3px solid #fb3c3c"></div>
<div class="box" style="left:208px;top:506px;width:4px;height:218px;background:linear-gradient(90deg,rgba(0,0,0,0),rgba(0,0,0,0.12))"></div>
<div class="box" style="left:211px;top:509px;width:1016px;height:215px;background:#f2f2f2;border-left:1px solid #3c3c3c"></div>
<div class="box" style="left:211px;top:505px;width:1016px;height:17px;background:#545454;border-top:1px solid #3c3c3c;border-left:1px solid #3c3c3c;border-top-left-radius:3px"></div>
<div class="box" style="left:211px;top:522px;width:1016px;height:16px;background:#333"></div>
<svg class="abs" style="left:219px;top:514px" width="20" height="14" viewBox="0 0 20 14"><path d="M0,0 H13.2 V3 H3 V11 H13.2 V14 H0 Z" fill="#858585"/><path d="M5.8,4.2 H19 L14,10 H5.8 Z" fill="#858585"/></svg>
<span class="t" style="left:241.6px;top:513.00px;font-size:15.0px;color:#d3d3d3;word-spacing:1.336px;letter-spacing:-0.142px;transform:scaleX(0.9733);transform-origin:0 0;">Restricted document list</span>
<div class="box" style="left:212px;top:538px;width:7px;height:1px;background:#e00000"></div><div class="box" style="left:212px;top:538px;width:1px;height:7px;background:#e00000"></div>
<div class="box" style="left:216px;top:548px;width:1011px;height:28px;border:1px solid #e2e2e2;border-right:0;background:#f4f4f4"></div>
<div class="btn" style="left:218px;top:551px;width:28px;height:22px"><svg width="28" height="22" viewBox="0 0 28 22"><rect x="10.5" y="1.5" width="7" height="4" rx="0.8" fill="#8cc832" stroke="#2f7038"/><rect x="16.6" y="1.2" width="1.4" height="4.6" fill="#2f7038"/><rect x="8.6" y="7.6" width="10.8" height="3.8" rx="1.2" fill="#aecbe9" stroke="#00609c" stroke-width="1.2"/><rect x="5.5" y="13.5" width="17" height="4" rx="0.8" fill="#8cc832" stroke="#2f7038"/><rect x="5.2" y="13.2" width="17.6" height="1.3" fill="#2f7038"/><rect x="21.4" y="13.2" width="1.5" height="4.6" fill="#2f7038"/></svg></div><div class="btn" style="left:248px;top:551px;width:28px;height:22px"><svg width="28" height="22" viewBox="0 0 28 22"><rect x="5.5" y="1.5" width="17" height="4" rx="0.8" fill="#8cc832" stroke="#2f7038"/><rect x="21.4" y="1.2" width="1.5" height="4.6" fill="#2f7038"/><rect x="8.6" y="7.6" width="10.8" height="3.8" rx="1.2" fill="#aecbe9" stroke="#00609c" stroke-width="1.2"/><rect x="10.5" y="13.5" width="7" height="4" rx="0.8" fill="#8cc832" stroke="#2f7038"/><rect x="10.2" y="13.2" width="7.6" height="1.3" fill="#2f7038"/><rect x="16.6" y="13.2" width="1.4" height="4.6" fill="#2f7038"/></svg></div><div class="btn" style="left:278px;top:551px;width:28px;height:22px"><svg width="28" height="22" viewBox="0 0 28 22"><g transform="translate(0,0)"><path d="M8.6,1.6 H12.4 V6.6 H15.6 V1.6 H19.4 V6 L22.4,8.2 V19.2 H15.6 V11 H12.4 V19.2 H5.6 V8.2 L8.6,6 Z" fill="#9dbfe2" stroke="#00568f" stroke-width="1.3" stroke-linejoin="round"/><rect x="5.2" y="18.2" width="7.6" height="1.6" fill="#00568f"/><rect x="15.2" y="18.2" width="7.6" height="1.6" fill="#00568f"/><rect x="11.4" y="10.4" width="1.4" height="8" fill="#00568f"/><rect x="21.6" y="8.4" width="1.2" height="10" fill="#00568f"/><rect x="7" y="8" width="2" height="10" fill="#bdd5ee" opacity="0.7"/><rect x="17" y="8" width="2" height="10" fill="#bdd5ee" opacity="0.7"/></g></svg></div><div class="btn" style="left:308px;top:551px;width:28px;height:22px"><svg width="28" height="22" viewBox="0 0 28 22"><path transform="translate(-1,0.7)" d="M8.6,1.6 H12.4 V6.6 H15.6 V1.6 H19.4 V6 L22.4,8.2 V19.2 H15.6 V11 H12.4 V19.2 H5.6 V8.2 L8.6,6 Z" fill="#c8dbec" stroke="#7fb0cf" stroke-width="1.2" stroke-linejoin="round"/><circle cx="19" cy="12" r="4.6" fill="#a9a6d4" stroke="#9c9acb" stroke-width="0.6"/><path d="M19,8.2 V15.8 M15.2,12 H22.8" stroke="#fff" stroke-width="2.2"/></svg></div><div class="btn" style="left:338px;top:551px;width:38px;height:22px"><svg width="38" height="22" viewBox="0 0 38 22"><path d="M3.7,1.7 H20.3 V4.6 L13.4,9 V17 H9.9 V9 L3.7,4.6 Z" fill="#9dbfe2" stroke="#00609c" stroke-width="1.3" stroke-linejoin="miter"/><rect x="3" y="1" width="18" height="1.6" fill="#00609c"/><circle cx="15.6" cy="10.9" r="2.5" fill="#e6e6e6" stroke="#00609c" stroke-width="1.2"/><rect x="9.2" y="16.6" width="5" height="1.4" fill="#00609c"/><path d="M34.2,12.2 V17 H29.400000000000002 Z" fill="#1a1a1a"/></svg><i class="bdiv" style="left:24px"></i></div><div class="tsep" style="left:380px;top:555px"></div><div class="btn" style="left:386px;top:551px;width:37px;height:22px"><svg width="37" height="22" viewBox="0 0 37 22"><path d="M11.5,3.8 H18.5 L21.5,6.8 V19.2 H9.5" fill="#fff" stroke="#555" stroke-width="1.1"/><path d="M18.3,3.8 V7 H21.5" fill="none" stroke="#555" stroke-width="1"/><rect x="9" y="18.8" width="12.9" height="1.2" fill="#444"/><rect x="2.6" y="1.7" width="9.8" height="14.6" rx="1.6" fill="#a9c8e8" stroke="#00609c" stroke-width="1.3"/><rect x="4.2" y="3.4" width="4" height="1.3" fill="#fff"/><rect x="4.2" y="6" width="4" height="1.2" fill="#fff"/><rect x="8.8" y="2.6" width="2.6" height="6" fill="#8fb4dc"/><path d="M7.3,9.8 H12.5 V7.2 L18,11.8 L12.5,16.4 V13.8 H7.3 Z" fill="#7fc21e" stroke="#2f7a38" stroke-width="1.1" stroke-linejoin="round"/><path d="M33.2,12.2 V17 H28.400000000000002 Z" fill="#1a1a1a"/></svg></div><div class="btn" style="left:425px;top:551px;width:28px;height:22px"><svg width="28" height="22" viewBox="0 0 28 22"><rect x="4" y="2" width="20" height="16" fill="#595959"/><rect x="5" y="3" width="5.1" height="3.9" fill="#ffd95a"/><rect x="11.1" y="3" width="5.1" height="3.9" fill="#a6c8ea"/><rect x="17.8" y="3" width="5.2" height="3.9" fill="#a5d46a"/><rect x="5" y="8" width="5.1" height="3.9" fill="#ff9a14"/><rect x="11.1" y="8" width="5.1" height="3.9" fill="#e8b8a0"/><rect x="17.8" y="8" width="5.2" height="3.9" fill="#ffc814"/><rect x="5" y="13" width="5.1" height="3.9" fill="#ffc8cc"/><rect x="11.1" y="13" width="5.1" height="3.9" fill="#b0dc96"/><rect x="17.8" y="13" width="5.2" height="3.9" fill="#96c0e8"/></svg></div><div class="tsep" style="left:457px;top:555px"></div><div class="btn" style="left:463px;top:551px;width:28px;height:22px"><svg width="28" height="22" viewBox="0 0 28 22"><rect x="4.7" y="1.7" width="5.6" height="17.6" fill="#b9d1eb" stroke="#005a96" stroke-width="1.4"/><rect x="4" y="18" width="7" height="2" fill="#005a96"/><rect x="14.6" y="3.6" width="5.8" height="15" fill="#ffd040" stroke="#f5960a" stroke-width="1.2"/><rect x="16.8" y="8.8" width="6.4" height="10.4" fill="#e26a22" stroke="#b83018" stroke-width="1.6"/><rect x="10.7" y="12.7" width="6.6" height="6.6" fill="#86c41e" stroke="#3a7a44" stroke-width="1.4"/><rect x="10" y="18.4" width="8" height="1.6" fill="#3a7a44"/></svg></div><div class="tsep" style="left:495px;top:555px"></div><div class="btn" style="left:501px;top:551px;width:28px;height:22px"><svg width="28" height="22" viewBox="0 0 28 22"><rect x="11.2" y="0.9" width="12.8" height="3.9" fill="#6ea0cc"/><rect x="14.6" y="2.2" width="3" height="1" fill="#fff"/><rect x="19" y="2.2" width="3" height="1" fill="#fff"/><rect x="11.2" y="4.8" width="12.8" height="6.8" fill="#fff"/><path d="M11.6,4.8 V11 M17.2,4.8 V11 M19.2,4.8 V11 M23.6,4.8 V11.4 H17.4" fill="none" stroke="#666" stroke-width="0.9"/><rect x="12.8" y="4.8" width="2.2" height="3.4" fill="#ffd23c"/><rect x="4" y="8" width="12" height="12" fill="#555"/><rect x="4" y="8" width="12" height="3.8" fill="#005a96"/><rect x="5" y="9.6" width="2.8" height="1" fill="#fff"/><rect x="9" y="9.6" width="2" height="1" fill="#fff"/><rect x="5" y="12" width="3" height="6.2" fill="#ffd23c"/><rect x="9" y="12" width="2" height="6.2" fill="#ffd23c"/><rect x="12.8" y="12" width="2.2" height="6.2" fill="#fff"/><path d="M23.2,13.4 V16.6 H18.8 M21,14.2 L18.6,16.6 L21,19" fill="none" stroke="#444" stroke-width="1.2"/><path d="M20.6,16.6 V19.6" stroke="#444" stroke-width="0.9"/></svg></div><div class="btn" style="left:531px;top:551px;width:28px;height:22px"><svg width="28" height="22" viewBox="0 0 28 22"><rect x="4.7" y="4" width="8.2" height="11" rx="2.6" fill="#9dbfe2" stroke="#005a96" stroke-width="1.4"/><rect x="15.1" y="4" width="8.2" height="11" rx="2.6" fill="#9dbfe2" stroke="#005a96" stroke-width="1.4"/><rect x="11.6" y="5.4" width="4.8" height="8.2" fill="#e2e2e2"/><rect x="8" y="5.2" width="4" height="8.6" fill="#e2e2e2" opacity="0"/><rect x="6" y="3.3" width="4.6" height="1.5" fill="#005a96"/><rect x="16.4" y="3.3" width="4.6" height="1.5" fill="#005a96"/><rect x="8.6" y="7.6" width="10.8" height="3.8" rx="1" fill="#a9c6e6" stroke="#005a96" stroke-width="1.4"/></svg></div>
<span class="t" style="left:219.4px;top:583.01px;font-size:26.8px;transform:scaleX(0.9215);transform-origin:0 0;">Controlling Step</span>
<div class="box" style="left:216px;top:614px;width:1011px;height:1px;background:#e2e2e2"></div>
<div class="box" style="left:216px;top:576px;width:1px;height:148px;background:#e8e8e8"></div>
<div class="box" style="left:218px;top:616px;width:1008px;height:25px;background:#e4e4e4;border-bottom:1px solid #d8d8d8"></div>
<div class="box" style="left:218px;top:641px;width:1008px;height:21px;background:#e9edf1;border-bottom:1px solid #e1e5e9"></div>
<div class="box" style="left:218px;top:662px;width:1008px;height:21px;background:#d5e0f0;border-bottom:1px solid #dde5f0"></div>
<div class="box" style="left:218px;top:683px;width:1008px;height:21px;background:#e9edf1;border-bottom:1px solid #dcdcdc"></div>
<div class="box" style="left:219px;top:642px;width:72px;height:18px;background:#c9e1ee"></div>
<div class="box" style="left:291px;top:616px;width:1px;height:88px;background:#d6d6d6"></div>
<div class="box" style="left:356px;top:616px;width:1px;height:88px;background:#d6d6d6"></div>
<div class="box" style="left:410px;top:616px;width:1px;height:88px;background:#d6d6d6"></div>
<div class="box" style="left:497px;top:616px;width:1px;height:88px;background:#d6d6d6"></div>
<div class="box" style="left:555px;top:616px;width:1px;height:88px;background:#d6d6d6"></div>
<div class="box" style="left:648px;top:616px;width:1px;height:88px;background:#d6d6d6"></div>
<div class="box" style="left:699px;top:616px;width:1px;height:88px;background:#d6d6d6"></div>
<div class="box" style="left:782px;top:616px;width:1px;height:88px;background:#d6d6d6"></div>
<div class="box" style="left:875px;top:616px;width:1px;height:88px;background:#d6d6d6"></div>
<div class="box" style="left:968px;top:616px;width:1px;height:88px;background:#d6d6d6"></div>
<div class="box" style="left:1006px;top:616px;width:1px;height:88px;background:#d6d6d6"></div>
<div class="box" style="left:1051px;top:616px;width:1px;height:88px;background:#d6d6d6"></div>
<div class="box" style="left:1107px;top:616px;width:1px;height:88px;background:#d6d6d6"></div>
<div class="box" style="left:1157px;top:616px;width:1px;height:88px;background:#d6d6d6"></div>
<div class="box" style="left:1224px;top:616px;width:1px;height:88px;background:#d6d6d6"></div>
<span class="t" style="left:220.3px;top:620.90px;font-size:15.0px;word-spacing:1.336px;letter-spacing:-0.236px;transform:scaleX(0.9733);transform-origin:0 0;">Process ID</span>
<span class="t" style="left:294.3px;top:620.90px;font-size:15.0px;word-spacing:1.336px;letter-spacing:0.622px;transform:scaleX(0.9733);transform-origin:0 0;">Inv. type</span>
<span class="t" style="left:358.6px;top:620.90px;font-size:15.0px;letter-spacing:-0.688px;transform:scaleX(0.9733);transform-origin:0 0;">CoCode</span>
<span class="t" style="left:413.4px;top:620.90px;font-size:15.0px;transform:scaleX(0.9733);transform-origin:0 0;">Doc.no.</span>
<span class="t" style="left:500.4px;top:620.90px;font-size:15.0px;word-spacing:1.336px;letter-spacing:-0.457px;transform:scaleX(0.9733);transform-origin:0 0;">Fiscal yr</span>
<span class="t" style="left:558.3px;top:620.90px;font-size:15.0px;word-spacing:1.336px;letter-spacing:0.263px;transform:scaleX(0.9733);transform-origin:0 0;">If. Appl.</span>
<span class="t" style="left:651.2px;top:620.90px;font-size:15.0px;letter-spacing:-0.462px;transform:scaleX(0.9733);transform-origin:0 0;">Record</span>
<span class="t" style="left:702.3px;top:620.90px;font-size:15.0px;word-spacing:1.336px;letter-spacing:-0.224px;transform:scaleX(0.9733);transform-origin:0 0;">Record type</span>
<span class="t" style="left:785.2px;top:620.90px;font-size:15.0px;word-spacing:1.336px;letter-spacing:-0.046px;transform:scaleX(0.9733);transform-origin:0 0;">Doc. date</span>
<span class="t" style="left:878.3px;top:620.90px;font-size:15.0px;word-spacing:1.336px;letter-spacing:-0.235px;transform:scaleX(0.9733);transform-origin:0 0;">Posting date</span>
<span class="t" style="left:971.3px;top:620.90px;font-size:15.0px;letter-spacing:0.432px;transform:scaleX(0.9733);transform-origin:0 0;">Type</span>
<span class="t" style="left:1009px;top:620.90px;font-size:15.0px;letter-spacing:-0.134px;transform:scaleX(0.9733);transform-origin:0 0;">Status</span>
<span class="t" style="left:1054px;top:620.90px;font-size:15.0px;letter-spacing:0.678px;transform:scaleX(0.9733);transform-origin:0 0;">Inv.stat</span>
<span class="t" style="left:1110px;top:620.90px;font-size:15.0px;letter-spacing:-0.154px;transform:scaleX(0.9733);transform-origin:0 0;">Vendor</span>
<span class="t" style="left:1160.2px;top:620.90px;font-size:15.0px;letter-spacing:-0.092px;transform:scaleX(0.9733);transform-origin:0 0;">Customer</span>
<span class="t u" style="left:220.3px;top:643.00px;font-size:15.0px;letter-spacing:-0.175px;transform:scaleX(0.9733);transform-origin:0 0;">212</span>
<span class="t" style="left:294.3px;top:643.00px;font-size:15.0px;transform:scaleX(0.9733);transform-origin:0 0;">FI</span>
<span class="t" style="left:358.6px;top:643.00px;font-size:15.0px;letter-spacing:-0.175px;transform:scaleX(0.9733);transform-origin:0 0;">1000</span>
<span class="t u" style="left:413.4px;top:643.00px;font-size:15.0px;letter-spacing:-0.175px;transform:scaleX(0.9733);transform-origin:0 0;">1900000032</span>
<span class="t" style="right:676.4px;top:643.00px;font-size:15.0px;letter-spacing:-0.175px;transform:scaleX(0.9733);transform-origin:100% 0;">2019</span>
<span class="t" style="left:558.3px;top:643.00px;font-size:15.0px;letter-spacing:-0.3px;transform:scaleX(0.9733);transform-origin:0 0;">QS_INVOICE</span>
<span class="t u" style="right:532.2px;top:643.00px;font-size:15.0px;letter-spacing:-0.175px;transform:scaleX(0.9733);transform-origin:100% 0;">98</span>
<span class="t" style="left:785.2px;top:643.00px;font-size:15.0px;letter-spacing:0.082px;transform:scaleX(0.9733);transform-origin:0 0;">26.02.2019</span>
<span class="t" style="left:878.3px;top:643.00px;font-size:15.0px;letter-spacing:0.082px;transform:scaleX(0.9733);transform-origin:0 0;">26.02.2019</span>
<span class="t" style="left:971.3px;top:643.00px;font-size:15.0px;letter-spacing:-1.233px;transform:scaleX(0.9733);transform-origin:0 0;">KR</span>
<span class="t" style="left:1009px;top:643.00px;font-size:15.0px;transform:scaleX(0.9733);transform-origin:0 0;">V</span>
<span class="t" style="left:1110px;top:643.00px;font-size:15.0px;letter-spacing:-0.175px;transform:scaleX(0.9733);transform-origin:0 0;">10040</span>
<span class="t u" style="left:220.3px;top:664.00px;font-size:15.0px;letter-spacing:-0.175px;transform:scaleX(0.9733);transform-origin:0 0;">247</span>
<span class="t" style="left:294.3px;top:664.00px;font-size:15.0px;transform:scaleX(0.9733);transform-origin:0 0;">FI</span>
<span class="t" style="left:358.6px;top:664.00px;font-size:15.0px;letter-spacing:-0.175px;transform:scaleX(0.9733);transform-origin:0 0;">1000</span>
<span class="t u" style="left:413.4px;top:664.00px;font-size:15.0px;letter-spacing:-0.175px;transform:scaleX(0.9733);transform-origin:0 0;">1900000037</span>
<span class="t" style="right:676.4px;top:664.00px;font-size:15.0px;letter-spacing:-0.175px;transform:scaleX(0.9733);transform-origin:100% 0;">2019</span>
<span class="t" style="left:558.3px;top:664.00px;font-size:15.0px;letter-spacing:-0.3px;transform:scaleX(0.9733);transform-origin:0 0;">QS_INVOICE</span>
<span class="t u" style="right:532.2px;top:664.00px;font-size:15.0px;letter-spacing:-0.175px;transform:scaleX(0.9733);transform-origin:100% 0;">109</span>
<span class="t" style="left:785.2px;top:664.00px;font-size:15.0px;letter-spacing:0.082px;transform:scaleX(0.9733);transform-origin:0 0;">26.02.2019</span>
<span class="t" style="left:878.3px;top:664.00px;font-size:15.0px;letter-spacing:0.082px;transform:scaleX(0.9733);transform-origin:0 0;">26.02.2019</span>
<span class="t" style="left:971.3px;top:664.00px;font-size:15.0px;letter-spacing:-1.233px;transform:scaleX(0.9733);transform-origin:0 0;">KR</span>
<span class="t" style="left:1009px;top:664.00px;font-size:15.0px;transform:scaleX(0.9733);transform-origin:0 0;">V</span>
<span class="t" style="left:1110px;top:664.00px;font-size:15.0px;letter-spacing:-0.175px;transform:scaleX(0.9733);transform-origin:0 0;">10040</span>
<span class="t u" style="left:220.3px;top:685.00px;font-size:15.0px;letter-spacing:-0.175px;transform:scaleX(0.9733);transform-origin:0 0;">267</span>
<span class="t" style="left:294.3px;top:685.00px;font-size:15.0px;transform:scaleX(0.9733);transform-origin:0 0;">FI</span>
<span class="t" style="left:358.6px;top:685.00px;font-size:15.0px;letter-spacing:-0.175px;transform:scaleX(0.9733);transform-origin:0 0;">1000</span>
<span class="t u" style="left:413.4px;top:685.00px;font-size:15.0px;letter-spacing:-0.175px;transform:scaleX(0.9733);transform-origin:0 0;">1900000039</span>
<span class="t" style="right:676.4px;top:685.00px;font-size:15.0px;letter-spacing:-0.175px;transform:scaleX(0.9733);transform-origin:100% 0;">2019</span>
<span class="t" style="left:558.3px;top:685.00px;font-size:15.0px;letter-spacing:-0.3px;transform:scaleX(0.9733);transform-origin:0 0;">QS_INVOICE</span>
<span class="t u" style="right:532.2px;top:685.00px;font-size:15.0px;letter-spacing:-0.175px;transform:scaleX(0.9733);transform-origin:100% 0;">116</span>
<span class="t" style="left:785.2px;top:685.00px;font-size:15.0px;letter-spacing:0.082px;transform:scaleX(0.9733);transform-origin:0 0;">14.03.2019</span>
<span class="t" style="left:878.3px;top:685.00px;font-size:15.0px;letter-spacing:0.082px;transform:scaleX(0.9733);transform-origin:0 0;">14.03.2019</span>
<span class="t" style="left:971.3px;top:685.00px;font-size:15.0px;letter-spacing:-1.233px;transform:scaleX(0.9733);transform-origin:0 0;">KR</span>
<span class="t" style="left:1009px;top:685.00px;font-size:15.0px;transform:scaleX(0.9733);transform-origin:0 0;">V</span>
<span class="t" style="left:1110px;top:685.00px;font-size:15.0px;letter-spacing:-0.175px;transform:scaleX(0.9733);transform-origin:0 0;">10040</span>
<div class="box" style="left:0;top:0;width:1227px;height:724px;border:1px solid #b7b7b7;pointer-events:none"></div>
</body></html>
